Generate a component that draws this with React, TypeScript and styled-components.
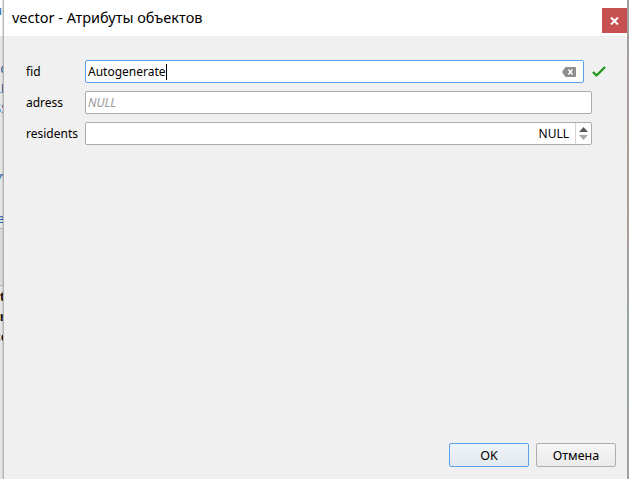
import styled, { createGlobalStyle } from 'styled-components';

const GlobalStyle = createGlobalStyle`
  html, body {
    margin: 0;
    padding: 0;
    background: #f0f0f0;
  }
  * {
    box-sizing: border-box;
  }
`;

const Desktop = styled.div`
  display: flex;
  width: 629px;
  height: 479px;
  overflow: hidden;
  font-family: "Noto Sans", "Open Sans", sans-serif;
`;

// behind-the-dialog window, only a few pixels show at the left
const BackStrip = styled.div`
  width: 3px;
  flex-shrink: 0;
  display: flex;
  flex-direction: column;
  background: #e6e6e6;
  overflow: hidden;
`;

const BackTop = styled.div`
  height: 36px;
  background: #ffffff;
`;

const BackLine = styled.div<{ $color?: string; $bold?: boolean }>`
  height: 20px;
  margin-left: -6px;
  font-size: 13px;
  line-height: 20px;
  font-weight: ${(p) => (p.$bold ? 700 : 400)};
  color: ${(p) => p.$color || '#1a1a1a'};
  white-space: nowrap;
`;

const BackGap = styled.div<{ $h: number; $bg?: string }>`
  height: ${(p) => p.$h}px;
  background: ${(p) => p.$bg || 'transparent'};
`;

const EdgeStrip = styled.div`
  width: 2px;
  flex-shrink: 0;
  background: linear-gradient(180deg, #a0a0a0 0%, #b09a96 40%, #98a8a4 70%, #a0a0a0 100%);
`;

const Dialog = styled.div`
  flex: 1;
  display: flex;
  flex-direction: column;
  background: #f0f0f0;
  border-left: 1px solid #b4b4b4;
  box-shadow: -1px 0 1px rgba(0, 0, 0, 0.1);
`;

const TitleBar = styled.div`
  height: 36px;
  flex-shrink: 0;
  display: flex;
  align-items: center;
  justify-content: space-between;
  background: #ffffff;
  padding: 0 0 0 8px;
`;

const Title = styled.span`
  font-size: 14.5px;
  color: #000000;
  margin-top: -2px;
`;

const CloseButton = styled.div`
  width: 25px;
  height: 25px;
  margin-top: 5px;
  background: #c75050;
  display: flex;
  align-items: center;
  justify-content: center;
`;

const Body = styled.div`
  flex: 1;
  display: flex;
  flex-direction: column;
  padding: 24px 35px 12px 22px;
`;

const Form = styled.div`
  display: grid;
  grid-template-columns: 59px 1fr;
  row-gap: 8px;
  align-items: center;
`;

const Label = styled.div`
  font-size: 12px;
  color: #000000;
`;

const FieldRow = styled.div<{ $extend?: boolean }>`
  display: flex;
  align-items: center;
  margin-right: ${(p) => (p.$extend ? '-14px' : '0')};
`;

const Input = styled.div<{ $focus?: boolean }>`
  flex: 1;
  height: 23px;
  display: flex;
  align-items: center;
  background: #ffffff;
  border: 1px solid ${(p) => (p.$focus ? '#5aa2e6' : '#acacac')};
  border-radius: 2px;
  padding: 0 0 0 2px;
  font-size: 12px;
  color: #000000;
`;

const Value = styled.span`
  flex: 1;
  display: flex;
  align-items: center;
  white-space: nowrap;
`;

const Caret = styled.span`
  display: inline-block;
  width: 1px;
  height: 16px;
  background: #000000;
`;

const Placeholder = styled.span`
  font-style: italic;
  color: #9a9a9a;
`;

const NumberValue = styled.span`
  flex: 1;
  text-align: right;
  padding-right: 6px;
`;

const Spinner = styled.div`
  width: 16px;
  height: 100%;
  display: flex;
  flex-direction: column;
  align-items: center;
  justify-content: center;
  gap: 3px;
  border-left: 1px solid #d4d4d4;
`;

const ClearIcon = styled.svg`
  margin-right: 7px;
  flex-shrink: 0;
`;

const CheckIcon = styled.svg`
  margin-left: 8px;
  flex-shrink: 0;
`;

const Spacer = styled.div`
  flex: 1;
`;

const ButtonBar = styled.div`
  display: flex;
  justify-content: flex-end;
  gap: 7px;
  margin-right: -24px;
`;

const Button = styled.button<{ $default?: boolean }>`
  width: 80px;
  height: 24px;
  font-family: "Noto Sans", "Open Sans", sans-serif;
  font-size: 12.5px;
  color: #000000;
  border-radius: 2px;
  border: 1px solid ${(p) => (p.$default ? '#5aa2e6' : '#adadad')};
  background: ${(p) =>
    p.$default
      ? 'linear-gradient(180deg, #eef3f8 0%, #e3e9f0 100%)'
      : 'linear-gradient(180deg, #f6f6f6 0%, #ebebeb 100%)'};
  padding: 0;
`;

const App = () => {
  return (
    <>
      <GlobalStyle />
      <Desktop>
        <BackStrip>
          <BackTop>
            <BackLine $color="#1f5fa8">uu</BackLine>
          </BackTop>
          <BackGap $h={22} />
          <BackLine $color="#1f5fa8">cc</BackLine>
          <BackLine $color="#1f5fa8">LL</BackLine>
          <BackLine $color="#1f5fa8">SS</BackLine>
          <BackGap $h={50} />
          <BackLine $color="#1f5fa8">VV</BackLine>
          <BackGap $h={20} />
          <BackLine $color="#1f5fa8">le</BackLine>
          <BackGap $h={1} $bg="#b8b8b8" />
          <BackGap $h={56} $bg="#dcdcdc" />
          <BackGap $h={1} $bg="#b8b8b8" />
          <BackLine $bold>tt</BackLine>
          <BackLine $bold>rr</BackLine>
          <BackLine $bold>cc</BackLine>
        </BackStrip>
        <Dialog>
          <TitleBar>
            <Title>vector - Атрибуты объектов</Title>
            <CloseButton>
              <svg width="9" height="8" viewBox="0 0 9 8">
                <path d="M1 0.5 L8 7.5 M8 0.5 L1 7.5" stroke="#ffffff" strokeWidth="2" />
              </svg>
            </CloseButton>
          </TitleBar>
          <Body>
            <Form>
              <Label>fid</Label>
              <FieldRow $extend>
                <Input $focus>
                  <Value>
                    Autogenerate
                    <Caret />
                  </Value>
                  <ClearIcon width="14" height="10" viewBox="0 0 14 10">
                    <path d="M0 5 L3.5 0 H13 Q14 0 14 1 V9 Q14 10 13 10 H3.5 Z" fill="#8e8e8e" />
                    <path d="M6.5 2.5 L10.5 7.5 M10.5 2.5 L6.5 7.5" stroke="#ffffff" strokeWidth="1.4" />
                  </ClearIcon>
                </Input>
                <CheckIcon width="14" height="11" viewBox="0 0 14 11">
                  <path d="M1 6 L4.5 9.5 L13 1" stroke="#1f9a1f" strokeWidth="2.4" fill="none" strokeLinejoin="round" />
                </CheckIcon>
              </FieldRow>

              <Label>adress</Label>
              <FieldRow>
                <Input>
                  <Value>
                    <Placeholder>NULL</Placeholder>
                  </Value>
                </Input>
              </FieldRow>

              <Label>residents</Label>
              <FieldRow>
                <Input>
                  <NumberValue>NULL</NumberValue>
                  <Spinner>
                    <svg width="9" height="5" viewBox="0 0 9 5">
                      <path d="M0 5 L4.5 0 L9 5 Z" fill="#5a5a5a" />
                    </svg>
                    <svg width="9" height="5" viewBox="0 0 9 5">
                      <path d="M0 0 L4.5 5 L9 0 Z" fill="#a8a8a8" />
                    </svg>
                  </Spinner>
                </Input>
              </FieldRow>
            </Form>
            <Spacer />
            <ButtonBar>
              <Button $default>OK</Button>
              <Button>Отмена</Button>
            </ButtonBar>
          </Body>
        </Dialog>
        <EdgeStrip />
      </Desktop>
    </>
  );
};

export default App;
